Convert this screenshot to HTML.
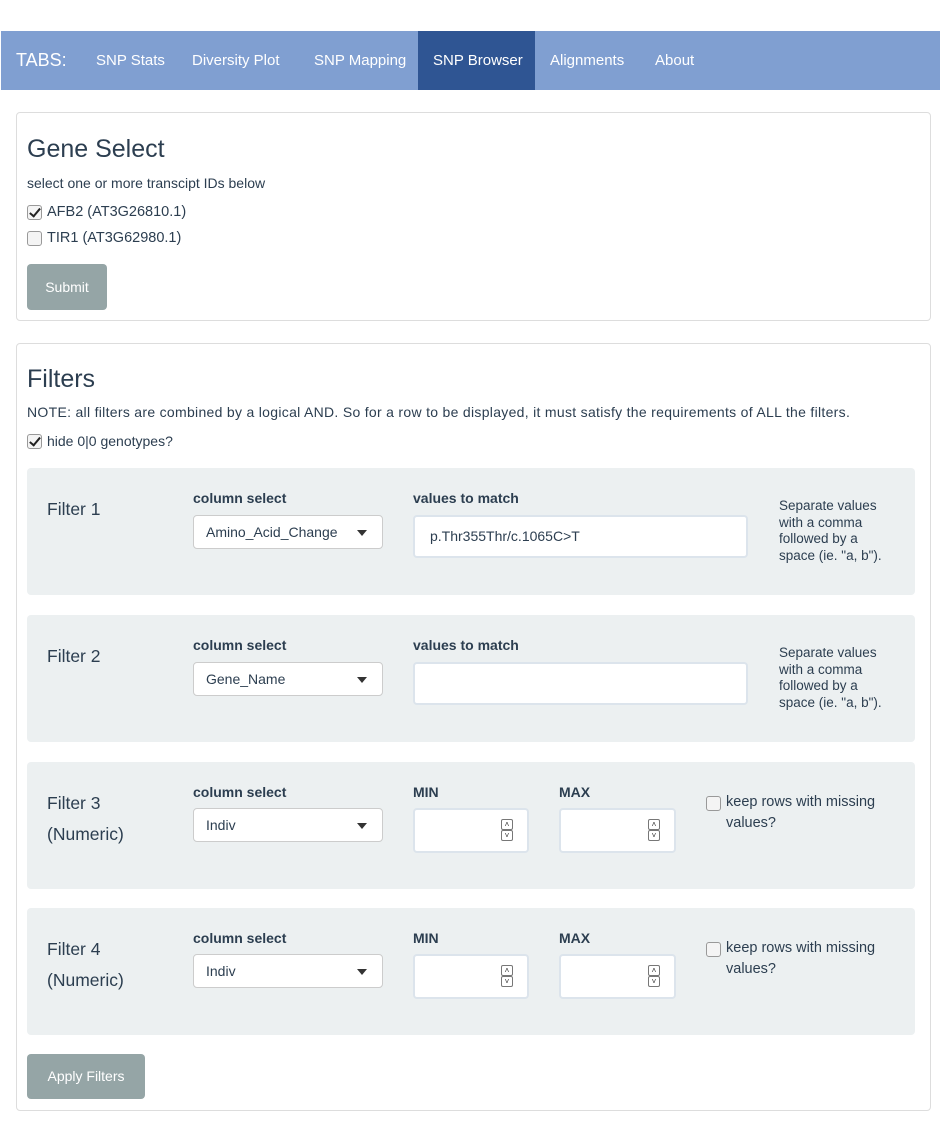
<!DOCTYPE html>
<html><head><style>
*{box-sizing:border-box;margin:0;padding:0}
body{width:940px;height:1121px;background:#fff;font-family:"Liberation Sans",sans-serif;color:#2c3e50;position:relative;overflow:hidden;font-size:14px}
.a{position:absolute;white-space:nowrap}
.nav{position:absolute;left:1px;top:31px;width:939px;height:59px;background:#809fd1}
.nav .a{color:#fff;font-size:15px;top:21px}
.act{position:absolute;left:417px;top:0;width:117px;height:59px;background:#2f5593}
.panel{position:absolute;left:16px;width:915px;border:1px solid #ddd;border-radius:4px}
.well{position:absolute;left:27px;width:888px;height:127px;background:#ecf0f1;border-radius:4px}
.cb{position:absolute;width:15px;height:15px;border:1px solid #999;border-radius:3px;background:#f4f4f4}
.cb.on::after{content:"";position:absolute;left:4px;top:0px;width:4px;height:9px;border:solid #222;border-width:0 2.5px 2.5px 0;transform:rotate(40deg)}
.btn{position:absolute;background:#95a5a6;color:#fff;border-radius:4px;font-size:14px;text-align:center}
.lbl{position:absolute;font-weight:bold;font-size:14px}
.sel{position:absolute;width:190px;height:34px;background:#fff;border:1px solid #ccc;border-radius:4px;font-size:14px;padding:8px 12px}
.sel::after{content:"";position:absolute;right:15px;top:14px;border:5px solid transparent;border-top:6px solid #333}
.inp{position:absolute;background:#fff;border:2px solid #dce4ec;border-radius:4px;font-size:14px}
.spin{position:absolute;right:14px;top:9px;width:12px;height:22px}
.spin i{display:block;width:12px;height:11px;border:1px solid #777;border-radius:2px;font-style:normal;font-size:8px;line-height:9px;text-align:center;color:#333}
.help{position:absolute;left:779px;font-size:13.5px;line-height:16.5px;white-space:normal;width:110px}
.fl{position:absolute;left:47px;font-size:17.5px;line-height:31px}
</style></head><body>
<div class="nav">
<div class="act"></div>
<div class="a" style="left:15px;top:19px;font-size:18px">TABS:</div>
<div class="a" style="left:95px">SNP Stats</div>
<div class="a" style="left:191px">Diversity Plot</div>
<div class="a" style="left:313px">SNP Mapping</div>
<div class="a" style="left:432px">SNP Browser</div>
<div class="a" style="left:549px">Alignments</div>
<div class="a" style="left:654px">About</div>
</div>

<div class="panel" style="top:112px;height:209px"></div>
<div class="a" style="left:27px;top:135px;font-size:25px">Gene Select</div>
<div class="a" style="left:27px;top:175px;font-size:14px">select one or more transcipt IDs below</div>
<div class="cb on" style="left:27px;top:205px"></div>
<div class="a" style="left:47px;top:204px;font-size:14.5px">AFB2 (AT3G26810.1)</div>
<div class="cb" style="left:27px;top:231px"></div>
<div class="a" style="left:47px;top:230px;font-size:14.5px">TIR1 (AT3G62980.1)</div>
<div class="btn" style="left:27px;top:264px;width:80px;height:46px;line-height:46px">Submit</div>

<div class="panel" style="top:343px;height:768px"></div>
<div class="a" style="left:27px;top:365px;font-size:25px">Filters</div>
<div class="a" style="left:27px;top:404px;font-size:14px;letter-spacing:0.3px">NOTE: all filters are combined by a logical AND. So for a row to be displayed, it must satisfy the requirements of ALL the filters.</div>
<div class="cb on" style="left:27px;top:434px"></div>
<div class="a" style="left:47px;top:433px;font-size:14px">hide 0|0 genotypes?</div>

<div class="well" style="top:468px"></div>
<div class="fl" style="top:494px">Filter 1</div>
<div class="lbl" style="left:193px;top:490px">column select</div>
<div class="sel" style="left:193px;top:515px">Amino_Acid_Change</div>
<div class="lbl" style="left:413px;top:490px">values to match</div>
<div class="inp" style="left:413px;top:515px;width:335px;height:43px;padding:11px 15px">p.Thr355Thr/c.1065C&gt;T</div>
<div class="help" style="top:498px">Separate values with a comma followed by a space (ie. "a, b").</div>

<div class="well" style="top:615px"></div>
<div class="fl" style="top:641px">Filter 2</div>
<div class="lbl" style="left:193px;top:637px">column select</div>
<div class="sel" style="left:193px;top:662px">Gene_Name</div>
<div class="lbl" style="left:413px;top:637px">values to match</div>
<div class="inp" style="left:413px;top:662px;width:335px;height:43px"></div>
<div class="help" style="top:645px">Separate values with a comma followed by a space (ie. "a, b").</div>

<div class="well" style="top:762px"></div>
<div class="fl" style="top:788px">Filter 3<br>(Numeric)</div>
<div class="lbl" style="left:193px;top:784px">column select</div>
<div class="sel" style="left:193px;top:808px">Indiv</div>
<div class="lbl" style="left:413px;top:784px">MIN</div>
<div class="inp" style="left:413px;top:808px;width:116px;height:45px"><div class="spin"><i>˄</i><i>˅</i></div></div>
<div class="lbl" style="left:559px;top:784px">MAX</div>
<div class="inp" style="left:559px;top:808px;width:117px;height:45px"><div class="spin"><i>˄</i><i>˅</i></div></div>
<div class="cb" style="left:706px;top:796px"></div>
<div class="a" style="left:726px;top:792px;font-size:14.5px;line-height:21px">keep rows with missing<br>values?</div>

<div class="well" style="top:908px"></div>
<div class="fl" style="top:934px">Filter 4<br>(Numeric)</div>
<div class="lbl" style="left:193px;top:930px">column select</div>
<div class="sel" style="left:193px;top:954px">Indiv</div>
<div class="lbl" style="left:413px;top:930px">MIN</div>
<div class="inp" style="left:413px;top:954px;width:116px;height:45px"><div class="spin"><i>˄</i><i>˅</i></div></div>
<div class="lbl" style="left:559px;top:930px">MAX</div>
<div class="inp" style="left:559px;top:954px;width:117px;height:45px"><div class="spin"><i>˄</i><i>˅</i></div></div>
<div class="cb" style="left:706px;top:942px"></div>
<div class="a" style="left:726px;top:938px;font-size:14.5px;line-height:21px">keep rows with missing<br>values?</div>

<div class="btn" style="left:27px;top:1054px;width:118px;height:45px;line-height:45px">Apply Filters</div>
</body></html>
